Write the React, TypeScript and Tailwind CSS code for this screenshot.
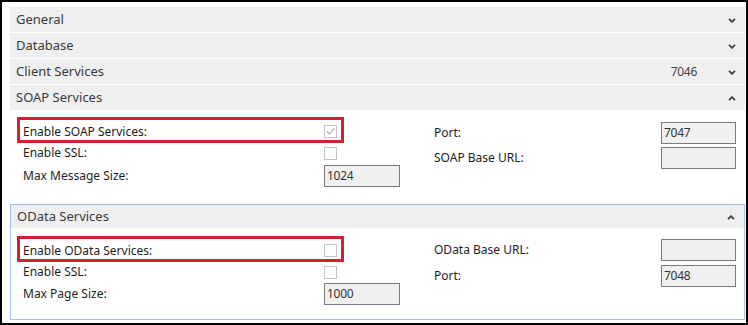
import React from "react";

const font = { fontFamily: '"Noto Sans", "Open Sans", sans-serif' };

function Chevron({ up }: { up?: boolean }) {
  return (
    <svg width="8" height="5" viewBox="0 0 8 5" className="shrink-0">
      <polyline
        points={up ? "1,4.2 4,1.2 7,4.2" : "1,0.8 4,3.8 7,0.8"}
        fill="none"
        stroke="#444"
        strokeWidth="1.9"
      />
    </svg>
  );
}

function Header({
  title,
  value,
  up,
  tall = true,
}: {
  title: string;
  value?: string;
  up?: boolean;
  tall?: boolean;
}) {
  return (
    <div
      className={`flex items-center bg-[#efefef] pl-[6px] pr-[9px] pt-px text-[13px] text-[#3a3a3a] ${
        tall ? "h-[25px]" : "h-[23px]"
      }`}
    >
      <span className="flex-1">{title}</span>
      {value && <span className="mr-[31px] text-[12px] tracking-[-0.3px] text-[#444]">{value}</span>}
      <Chevron up={up} />
    </div>
  );
}

function Checkbox({ checked }: { checked?: boolean }) {
  return (
    <div className="flex h-[13px] w-[13px] items-center justify-center border border-[#c4c4c4] bg-white">
      {checked && (
        <svg width="11" height="11" viewBox="0 0 11 11">
          <polyline points="2,5.5 4.5,8 9,2.5" fill="none" stroke="#a8a8a8" strokeWidth="1.1" />
        </svg>
      )}
    </div>
  );
}

function TextBox({ value, w = "w-[76px]" }: { value?: string; w?: string }) {
  return (
    <div
      className={`flex h-[22px] ${w} items-center border border-[#7a7a7a] bg-[#f0f0f0] pl-[2px] text-[12px] tracking-[-0.3px] text-[#333]`}
    >
      {value}
    </div>
  );
}

function Section({
  title,
  enableLabel,
  sizeLabel,
  sizeValue,
  right,
  focused,
}: {
  title: string;
  enableLabel: string;
  sizeLabel: string;
  sizeValue: string;
  right: { label: string; value?: string }[];
  focused?: boolean;
}) {
  return (
    <div className={focused ? "border border-[#a3bfe6]" : ""}>
      <Header title={title} up tall={!focused} />
      <div
        className={`flex text-[12px] text-[#1e1e1e] ${
          focused ? "pl-[6px] pt-[8px] pb-[14px]" : "pl-[7px] pt-[7px] pb-[17px]"
        }`}
      >
        <div className="flex w-[417px] flex-col">
          <div className="flex h-[26px] w-[327px] items-center border-[3px] border-[#d3222f] pt-[3px]">
            <span className="w-[304px] pl-[3px]">{enableLabel}</span>
            <Checkbox checked={!focused} />
          </div>
          <div className="flex h-[20px] items-center">
            <span className="w-[307px] pl-[6px]">Enable SSL:</span>
            <Checkbox />
          </div>
          <div className={`flex h-[22px] items-center ${focused ? "mt-px" : "mt-[2px]"}`}>
            <span className="w-[307px] pl-[6px]">{sizeLabel}</span>
            <TextBox value={sizeValue} />
          </div>
        </div>
        <div className={`flex flex-col ${focused ? "gap-[4px] pt-[3px]" : "gap-[3px] pt-[5px]"}`}>
          {right.map((r) => (
            <div key={r.label} className="flex h-[22px] items-center">
              <span className="w-[227px]">{r.label}</span>
              <TextBox value={r.value} w="w-[75px]" />
            </div>
          ))}
        </div>
      </div>
    </div>
  );
}

export default function App() {
  return (
    <div
      style={font}
      className="h-[325px] w-[748px] overflow-hidden border-2 border-black bg-white pl-[8px] pr-px pt-[5px]"
    >
      <div className="flex flex-col gap-px">
        <Header title="General" />
        <Header title="Database" />
        <Header title="Client Services" value="7046" />
      </div>
      <div className="mt-px">
        <Section
          title="SOAP Services"
          enableLabel="Enable SOAP Services:"
          sizeLabel="Max Message Size:"
          sizeValue="1024"
          right={[
            { label: "Port:", value: "7047" },
            { label: "SOAP Base URL:" },
          ]}
        />
      </div>
      <Section
        focused
        title="OData Services"
        enableLabel="Enable OData Services:"
        sizeLabel="Max Page Size:"
        sizeValue="1000"
        right={[
          { label: "OData Base URL:" },
          { label: "Port:", value: "7048" },
        ]}
      />
    </div>
  );
}
